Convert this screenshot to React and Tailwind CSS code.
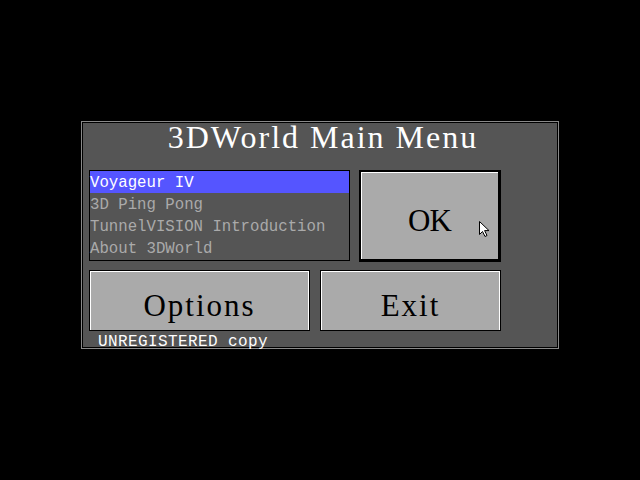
import { useState } from "react";

const items = [
  "Voyageur IV",
  "3D Ping Pong",
  "TunnelVISION Introduction",
  "About 3DWorld",
];

function Pointer() {
  return (
    <svg
      className="absolute left-[118px] top-[49px]"
      width="12"
      height="17"
      viewBox="0 0 12 17"
    >
      <path
        d="M0.5 0.5 L0.5 13.5 L3.5 10.5 L6 15.5 L8 14.5 L5.6 9.6 L10 9.6 Z"
        fill="#fff"
        stroke="#000"
        strokeWidth="1"
        strokeLinejoin="miter"
      />
    </svg>
  );
}

export default function App() {
  const [selected, setSelected] = useState(0);

  return (
    <div className="w-[640px] h-[480px] bg-black pt-[121px]">
      {/* main menu window */}
      <div className="mx-auto w-[478px] h-[228px] border border-[#8a8a8a] bg-black p-px">
        <div className="h-full bg-[#555555] pl-[6px] flex flex-col">
          <div
            className="shrink-0 h-[47px] text-center leading-[28px] text-white text-[32px] tracking-[2px]"
            style={{ fontFamily: '"Liberation Serif", serif' }}
          >
            3DWorld Main Menu
          </div>

          <div className="shrink-0 flex gap-[9px]">
            <ul
              className="w-[261px] h-[91px] border border-black"
              style={{ fontFamily: '"Liberation Mono", monospace' }}
            >
              {items.map((name, i) => (
                <li
                  key={name}
                  onClick={() => setSelected(i)}
                  className={`h-[22px] leading-[24px] text-[15.7px] cursor-default ${
                    i === selected
                      ? "bg-[#5555ff] text-white"
                      : "text-[#aaaaaa]"
                  }`}
                >
                  {name}
                </li>
              ))}
            </ul>

            <div className="relative w-[142px] h-[92px] border-2 border-black border-r-[3px] border-b-[3px] bg-[#aaaaaa] shadow-[inset_1px_1px_0_#ffffff]">
              <div
                className="h-full flex items-center justify-center text-black text-[31px] tracking-[-1px] pt-[11px]"
                style={{ fontFamily: '"Liberation Serif", serif' }}
              >
                OK
              </div>
              <Pointer />
            </div>
          </div>

          <div
            className="shrink-0 flex gap-[10px] mt-[8px] text-black text-[31px] tracking-[2px]"
            style={{ fontFamily: '"Liberation Serif", serif' }}
          >
            <button className="w-[221px] h-[61px] border border-black bg-[#aaaaaa] shadow-[inset_1px_1px_0_#ffffff,inset_-1px_0_0_#ffffff] pt-[11px]">
              Options
            </button>
            <button className="w-[181px] h-[61px] border border-black bg-[#aaaaaa] shadow-[inset_1px_1px_0_#ffffff,inset_-1px_0_0_#ffffff] pt-[11px]">
              Exit
            </button>
          </div>

          <div
            className="shrink-0 h-[16px] pt-[3px] pl-[9px] text-white text-[16px] tracking-[0.4px] leading-[16px]"
            style={{ fontFamily: '"Liberation Mono", monospace' }}
          >
            UNREGISTERED copy
          </div>
        </div>
      </div>
    </div>
  );
}
